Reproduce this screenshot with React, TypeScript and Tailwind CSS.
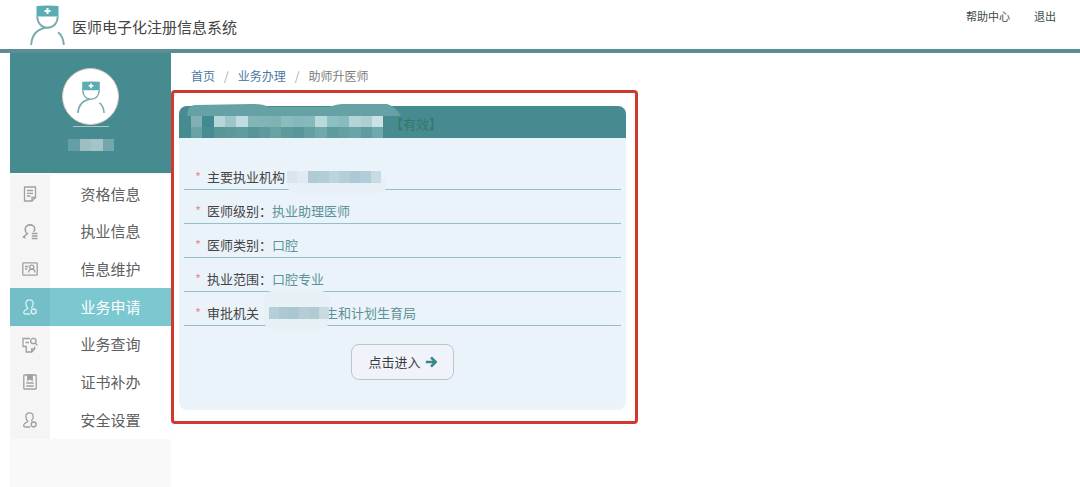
import type { ReactNode } from 'react'
import { clsx } from 'clsx'

type MenuItem = {
  label: string
  icon: ReactNode
  active?: boolean
}

const userCogIcon = (
  <>
    <path d="M6 9.2C4.600 8.200 3.900 6.600 3.900 4.700 3.900 2.200 5.300.8 7.500.8s3.700 1.400 3.700 3.900c0 1.900-.8 3.300-2 4.300" />
    <path d="M6 9.200C6 10.400 2 10.600 1.700 13.200c-.1 1.200.7 1.800 1.900 1.800h4.600" />
    <circle cx="11.600" cy="12.400" r="2.400" />
    <path d="M11.600 9.300v.7M14.300 10.900l-.6.3M14.300 13.900l-.6-.3M11.600 15.500v-.7M8.900 13.900l.6-.3M8.900 10.900l.6.3" />
  </>
)

const menuItems: MenuItem[] = [
  {
    label: '资格信息',
    icon: (
      <>
        <path d="M2.500 1h11v10.500L10 15H2.500z" />
        <path d="M13.500 11.500H10V15M5 4.500h6M5 7.300h6M5 10h3.500" />
      </>
    ),
  },
  {
    label: '执业信息',
    icon: (
      <>
        <path d="M11.500 7.800c.9-.9 1.200-1.800 1.200-2.800C12.700 2.500 10.600.9 8 .9S3.200 2.600 3.200 5.400c0 1.900.9 3.300 2.200 4.200L1 13.500" strokeWidth="1.600" />
        <path d="M1 12.500L3.500 14.300M9.800 9.500h5.700M9.800 12h5.700M9.800 14.500h5.700" />
      </>
    ),
  },
  {
    label: '信息维护',
    icon: (
      <>
        <rect x=".8" y="1.800" width="14.400" height="12.400" rx=".8" />
        <circle cx="9.800" cy="6.200" r="2" />
        <path d="M6.500 11.500c.2-2 1.500-3.300 3.300-3.300s3.100 1.300 3.300 3.300M3 5.500h3.500M3 8h2.200" />
      </>
    ),
  },
  { label: '业务申请', active: true, icon: userCogIcon },
  {
    label: '业务查询',
    icon: (
      <>
        <path d="M7.800 1.500H1v8h3.200V15h5.500l3-3.200V9.500M12.700 11.800h-3V15M3.500 5.500h3.500" />
        <circle cx="11.300" cy="4" r="2.700" />
        <path d="M13.200 6l2.200 2.400" />
      </>
    ),
  },
  {
    label: '证书补办',
    icon: (
      <>
        <rect x="1.800" y="1" width="12.400" height="14" rx=".4" />
        <path d="M5.800 1v5.300L8 4.800l2.200 1.500V1z" fill="currentColor" />
        <path d="M4.300 9h7.400M4.300 12h7.400" />
      </>
    ),
  },
  { label: '安全设置', icon: userCogIcon },
]

const fields = [
  { label: '主要执业机构', value: '' },
  { label: '医师级别：', value: '执业助理医师' },
  { label: '医师类别：', value: '口腔' },
  { label: '执业范围：', value: '口腔专业' },
  { label: '审批机关', value: '生和计划生育局' },
]

const titleMosaic = [
  ['#80b0b5', '#418a91', '#b5d6da', '#9cc6ca', '#bfdde0', '#83b5b7', '#80b4b5', '#7fb2b3', '#8abcbe', '#84b8ba', '#86b9bb', '#b8dadc', '#8ebfc3', '#87bbbd', '#b4d4d7', '#acd0d2', '#cbe2e4'],
  ['#68a1a6', '#468c92', '#589699', '#5b999b', '#5f9c9e', '#559598', '#5c9a9d', '#68a2a3', '#5d9a9c', '#579799', '#62a0a2', '#70a9aa', '#5c9b9e', '#659fa2', '#6aa4a6', '#5e9c9f', '#70a9ad'],
]

const orgMosaic = ['#dbe5eb', '#e0eaf1', '#afcbd5', '#b1cdd7', '#bdd4dd', '#b5cfd9', '#adc9d5', '#b3ccd9', '#c7dbe3']
const officeMosaic = ['#b5ced7', '#acc8d1', '#a9c7d0', '#b5ced5', '#b0cbd2', '#c7dadf']

function DoctorLogo({ className }: { className?: string }) {
  return (
    <svg viewBox="0 0 35 42" fill="none" className={className} aria-hidden="true">
      <path d="M6.500 2Q17.500 1 28.500 2v10.500h-22z" fill="#5aaeb3" />
      <path d="M17.500 4v6M14.500 7h6" stroke="#fff" strokeWidth="2" />
      <path
        d="M7.200 12.500c.3 6.800 4.300 11.200 10.300 11.200s10-4.400 10.300-11.200M1.200 41C1.600 30.500 8 25.300 15.500 23.700M28 28.200c3.400 2.500 5.500 7 5.800 12.800"
        stroke="#76aaae"
        strokeWidth="1.900"
      />
    </svg>
  )
}

function Mosaic({ colors, className }: { colors: string[]; className?: string }) {
  return (
    <svg
      viewBox={`0 0 ${colors.length} 1`}
      preserveAspectRatio="none"
      shapeRendering="crispEdges"
      className={className}
      aria-hidden="true"
    >
      {colors.map((color, i) => (
        <rect key={i} x={i} width="1" height="1" fill={color} />
      ))}
    </svg>
  )
}

function TitleMosaic() {
  return (
    <svg viewBox="0 0 214 34" className="absolute bottom-0 left-2 h-[34px] w-[214px]" aria-hidden="true">
      <path d="M0 12Q0 1 8 1L65 0Q76 0 82 3L142 3Q150 0 156 0L200 0Q208 2 214 12z" fill="#66a1a5" />
      {titleMosaic.map((row, y) =>
        row.map((color, x) => (
          <rect
            key={`${x}-${y}`}
            x={4 + x * 11.3}
            y={12 + y * 11}
            width="11.300"
            height="11"
            fill={color}
            shapeRendering="crispEdges"
          />
        ))
      )}
    </svg>
  )
}

function Header() {
  return (
    <header className="flex h-[53px] items-start justify-between border-b-4 border-[#5b8d92] pl-[30px] pr-6">
      <div className="flex items-center gap-[7px] pt-1">
        <DoctorLogo className="h-[42px] w-[35px]" />
        <h1 className="pt-1 text-[15px] leading-5 text-[#444]">医师电子化注册信息系统</h1>
      </div>
      <div className="flex gap-6 pt-2 text-[11px] leading-4 text-[#3c4a48]">
        <a href="#help">帮助中心</a>
        <a href="#logout">退出</a>
      </div>
    </header>
  )
}

function Sidebar() {
  return (
    <aside className="w-[161px] shrink-0 bg-[#f9f9f9]">
      <div className="flex h-[120px] flex-col items-center bg-[#468b90] pt-[15px]">
        <div className="flex size-[57px] items-center justify-center rounded-full border border-[#d8c8c4] bg-white">
          <DoctorLogo className="h-[34px] w-7" />
        </div>
        <div className="mt-px h-px w-9 bg-[#a9c9cb]" />
        <Mosaic colors={['#659fa3', '#9dbfc3', '#a5c4c8', '#73a7ab']} className="mt-3 h-3 w-[46px]" />
      </div>
      <nav className="flex h-[266px] flex-col pt-0.5">
        {menuItems.map((item) => (
          <a
            key={item.label}
            href="#menu"
            aria-current={item.active ? 'page' : undefined}
            className={clsx(
              'flex flex-1 items-stretch text-[15px]',
              item.active ? 'bg-[#7cc8d1] text-white' : 'bg-white text-[#606060]'
            )}
          >
            <span
              className={clsx(
                'flex w-10 items-center justify-center',
                item.active ? 'bg-[#73bec7] text-[#d5f2f4]' : 'bg-[#f5f5f5] text-[#a0a0a0]'
              )}
            >
              <svg
                viewBox="0 0 16 16"
                fill="none"
                stroke="currentColor"
                strokeWidth="1.300"
                className="size-4"
                aria-hidden="true"
              >
                {item.icon}
              </svg>
            </span>
            <span className="flex flex-1 items-center justify-center">{item.label}</span>
          </a>
        ))}
      </nav>
    </aside>
  )
}

function Breadcrumb() {
  return (
    <nav className="flex h-[37px] items-center gap-2 pl-5 pt-2 text-xs text-[#4b78a0]">
      <a href="#home">首页</a>
      <span className="px-px text-[#aaa]">/</span>
      <a href="#business">业务办理</a>
      <span className="px-px text-[#aaa]">/</span>
      <span className="text-[#7c7c7c]">助师升医师</span>
    </nav>
  )
}

function FieldRow({ label, value }: { label: string; value: string }) {
  return (
    <div className="relative flex h-[34px] items-end border-b border-[#93bfca] pb-0.5 pl-[11px] text-[13px] leading-5">
      <span className="w-3 text-[#e58f92]">*</span>
      <dt className="text-[#444]">{label}</dt>
      <dd className="flex items-end text-[#5b9197]">
        {label === '主要执业机构' && (
          <>
            <span className="absolute -bottom-1 left-[104px] h-4 w-[98px] rounded-md bg-[#e7f0f6]" />
            <Mosaic colors={orgMosaic} className="relative mb-1 ml-0.5 h-3 w-[94px]" />
          </>
        )}
        {label === '审批机关' && (
          <>
            <span className="absolute -bottom-1 left-20 h-[38px] w-[65px] rounded-lg bg-[#e7f0f5]" />
            <Mosaic colors={officeMosaic} className="relative z-10 mb-1 ml-[10px] h-3 w-[60px]" />
          </>
        )}
        <span className={clsx('relative', label === '审批机关' && '-ml-1')}>{value}</span>
      </dd>
    </div>
  )
}

function LicenseCard() {
  return (
    <section className="rounded-lg bg-[#ebf3fa]">
      <h2 className="relative flex h-8 items-center rounded-t-lg bg-[#468b90] pl-[211px] pt-1 text-[13px] text-[#37786a]">
        【有效】
        <TitleMosaic />
      </h2>
      <div className="px-[5px] pb-[30px] pt-[18px]">
        <dl>
          {fields.map((field) => (
            <FieldRow key={field.label} {...field} />
          ))}
        </dl>
        <div className="flex justify-center pt-[18px]">
          <button
            type="button"
            className="flex h-9 items-center gap-1 rounded-lg border border-[#bfc3cf] bg-[#f0f4fa] px-4 text-[13px] text-[#3c3c3c]"
          >
            点击进入
            <svg viewBox="0 0 14 14" fill="none" stroke="#39868a" strokeWidth="3" className="size-3" aria-hidden="true">
              <path d="M1 7h11M7 1.500l5.500 5.500L7 12.500" />
            </svg>
          </button>
        </div>
      </div>
    </section>
  )
}

export default function App() {
  return (
    <div className="flex min-h-screen flex-col bg-white font-['Noto_Sans_CJK_SC',sans-serif]">
      <Header />
      <div className="flex flex-1 pl-[10px]">
        <Sidebar />
        <main className="min-w-0 flex-1">
          <Breadcrumb />
          <div className="w-full max-w-[467px] rounded-sm border-[3px] border-[#cf3a30] pb-[11px] pl-[5px] pr-[9px] pt-[13px]">
            <LicenseCard />
          </div>
        </main>
      </div>
    </div>
  )
}
